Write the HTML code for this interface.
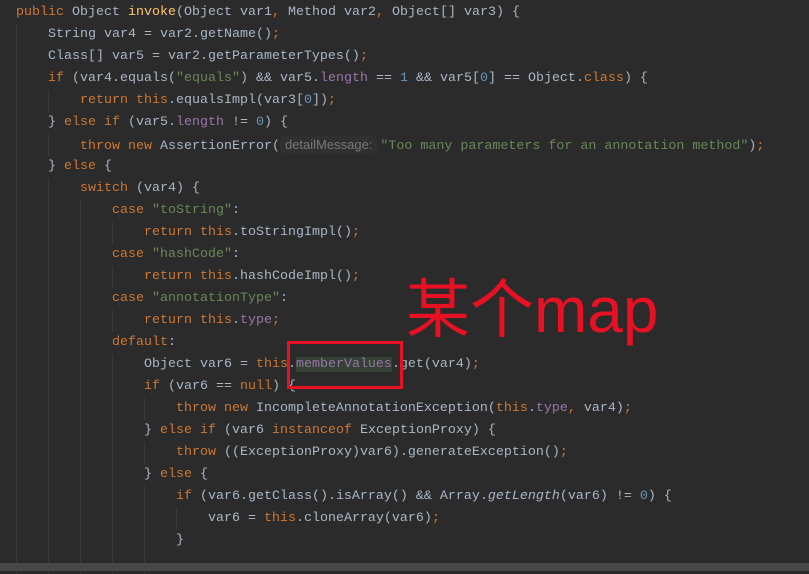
<!DOCTYPE html><html><head><style>
body{margin:0;background:#2b2b2b;width:809px;height:574px;overflow:hidden;position:relative;font-family:"Liberation Mono",monospace;font-size:13.33px;color:#a9b7c6}
.l{position:absolute;left:16px;height:22px;line-height:22px;white-space:pre}
.k{color:#cc7832}.s{color:#6a8759}.f{color:#9876aa}.n{color:#6897bb}.m{color:#ffc66d}.i{font-style:italic}
.g{position:absolute;width:1px;background:#393939}
.h{background:#303030;color:#787878;font-family:"Liberation Sans",sans-serif;font-size:13px;border-radius:3px;padding:1px 5px;margin-right:3px}
</style></head><body>
<div class="g" style="left:16px;top:24px;height:550px"></div>
<div class="g" style="left:48px;top:90px;height:22px"></div>
<div class="g" style="left:48px;top:134px;height:22px"></div>
<div class="g" style="left:48px;top:178px;height:396px"></div>
<div class="g" style="left:80px;top:200px;height:374px"></div>
<div class="g" style="left:112px;top:222px;height:22px"></div>
<div class="g" style="left:112px;top:266px;height:22px"></div>
<div class="g" style="left:112px;top:310px;height:22px"></div>
<div class="g" style="left:112px;top:354px;height:220px"></div>
<div class="g" style="left:144px;top:398px;height:22px"></div>
<div class="g" style="left:144px;top:442px;height:22px"></div>
<div class="g" style="left:144px;top:486px;height:88px"></div>
<div class="g" style="left:176px;top:508px;height:22px"></div>
<div class="l" style="top:2px"><span class="k">public </span>Object <span class="m">invoke</span>(Object var1<span class="k">, </span>Method var2<span class="k">, </span>Object[] var3) {</div>
<div class="l" style="top:24px">    String var4 = var2.getName()<span class="k">;</span></div>
<div class="l" style="top:46px">    Class[] var5 = var2.getParameterTypes()<span class="k">;</span></div>
<div class="l" style="top:68px">    <span class="k">if </span>(var4.equals(<span class="s">"equals"</span>) &amp;&amp; var5.<span class="f">length</span> == <span class="n">1</span> &amp;&amp; var5[<span class="n">0</span>] == Object.<span class="k">class</span>) {</div>
<div class="l" style="top:90px">        <span class="k">return this</span>.equalsImpl(var3[<span class="n">0</span>])<span class="k">;</span></div>
<div class="l" style="top:112px">    } <span class="k">else if </span>(var5.<span class="f">length</span> != <span class="n">0</span>) {</div>
<div class="l" style="top:134px">        <span class="k">throw new </span>AssertionError(<span class="h">detailMessage:</span><span class="s">"Too many parameters for an annotation method"</span>)<span class="k">;</span></div>
<div class="l" style="top:156px">    } <span class="k">else </span>{</div>
<div class="l" style="top:178px">        <span class="k">switch </span>(var4) {</div>
<div class="l" style="top:200px">            <span class="k">case </span><span class="s">"toString"</span>:</div>
<div class="l" style="top:222px">                <span class="k">return this</span>.toStringImpl()<span class="k">;</span></div>
<div class="l" style="top:244px">            <span class="k">case </span><span class="s">"hashCode"</span>:</div>
<div class="l" style="top:266px">                <span class="k">return this</span>.hashCodeImpl()<span class="k">;</span></div>
<div class="l" style="top:288px">            <span class="k">case </span><span class="s">"annotationType"</span>:</div>
<div class="l" style="top:310px">                <span class="k">return this</span>.<span class="f">type</span><span class="k">;</span></div>
<div class="l" style="top:332px">            <span class="k">default</span>:</div>
<div class="l" style="top:354px">                Object var6 = <span class="k">this</span>.<span class="f" style="background:#344134">memberValues</span>.get(var4)<span class="k">;</span></div>
<div class="l" style="top:376px">                <span class="k">if </span>(var6 == <span class="k">null</span>) {</div>
<div class="l" style="top:398px">                    <span class="k">throw new </span>IncompleteAnnotationException(<span class="k">this</span>.<span class="f">type</span><span class="k">, </span>var4)<span class="k">;</span></div>
<div class="l" style="top:420px">                } <span class="k">else if </span>(var6 <span class="k">instanceof </span>ExceptionProxy) {</div>
<div class="l" style="top:442px">                    <span class="k">throw </span>((ExceptionProxy)var6).generateException()<span class="k">;</span></div>
<div class="l" style="top:464px">                } <span class="k">else </span>{</div>
<div class="l" style="top:486px">                    <span class="k">if </span>(var6.getClass().isArray() &amp;&amp; Array.<span class="i">getLength</span>(var6) != <span class="n">0</span>) {</div>
<div class="l" style="top:508px">                        var6 = <span class="k">this</span>.cloneArray(var6)<span class="k">;</span></div>
<div class="l" style="top:530px">                    }</div>
<div style="position:absolute;left:287px;top:341px;width:110px;height:42px;border:3px solid #e81123"></div>
<div style="position:absolute;left:406px;top:273px;font-family:'Liberation Sans','Noto Sans CJK SC',sans-serif;font-size:64px;line-height:74px;color:#e81123;white-space:nowrap">某个map</div>
<div style="position:absolute;left:0;top:563px;width:809px;height:8px;background:#474747"></div>
</body></html>
